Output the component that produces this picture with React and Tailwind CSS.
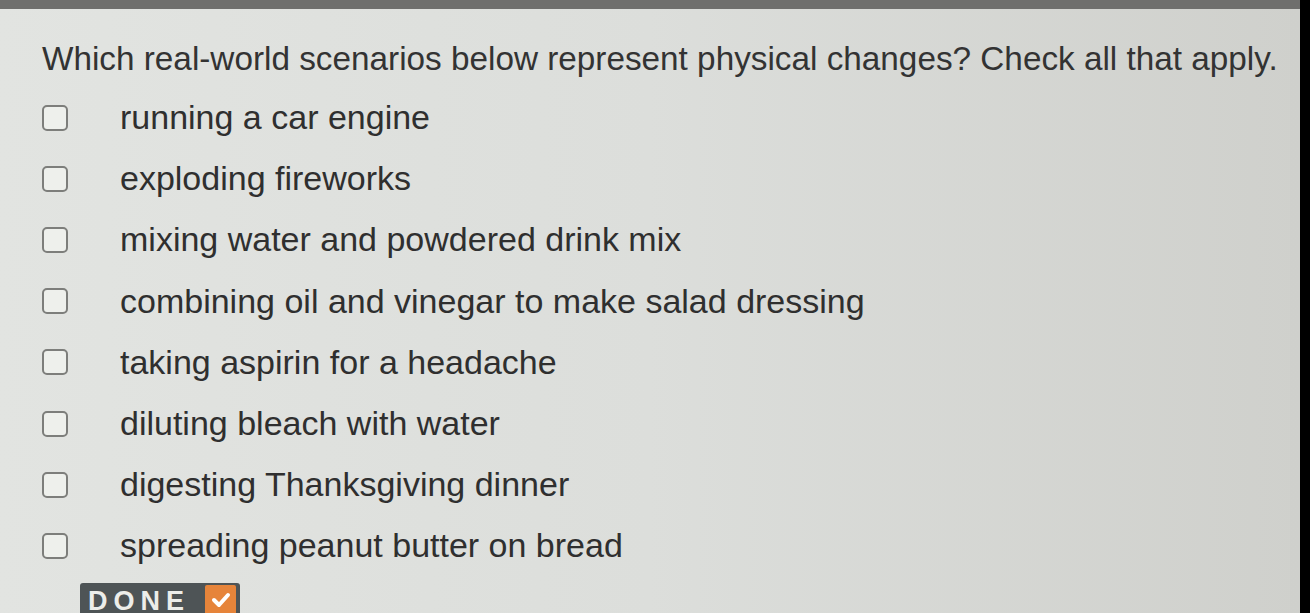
const options = [
  'running a car engine',
  'exploding fireworks',
  'mixing water and powdered drink mix',
  'combining oil and vinegar to make salad dressing',
  'taking aspirin for a headache',
  'diluting bleach with water',
  'digesting Thanksgiving dinner',
  'spreading peanut butter on bread',
]

function App() {
  return (
    <div className="flex h-[613px] w-[1310px] overflow-hidden bg-black">
      <div className="flex w-[1300px] flex-col bg-gradient-to-r from-[#e2e4e1] via-[#dcdedb] to-[#cfd0cc] font-['Liberation_Sans',Arial,sans-serif]">
        <div className="h-[9px] shrink-0 bg-[#6f6f6d]" />
        <h1 className="ml-[42px] mt-[30px] shrink-0 whitespace-nowrap text-[33.3px] leading-[40px] text-[#333333]">
          Which real-world scenarios below represent physical changes? Check all that apply.
        </h1>
        <ul className="mt-[8px] flex shrink-0 flex-col">
          {options.map((option) => (
            <li key={option} className="flex h-[61.2px] items-center">
              <span className="ml-[42px] h-[26px] w-[26px] rounded-[5px] border-2 border-[#7d7e7b] bg-[#eef0ec]" />
              <span className="ml-[52px] whitespace-nowrap text-[34px] text-[#2f2f2f]">{option}</span>
            </li>
          ))}
        </ul>
        <div className="ml-[80px] mt-[6px] flex h-[34px] w-[160px] shrink-0 items-start rounded-[3px] bg-[#4e5456] pl-[8px] pt-[2px]">
          <span className="text-[27px] font-bold leading-[32px] tracking-[6px] text-[#ecedea]">DONE</span>
          <span className="ml-auto mr-[4px] flex h-[30px] w-[31px] items-center justify-center rounded-[2px] bg-[#e6843a]">
            <svg width="20" height="16" viewBox="0 0 20 16">
              <path d="M3 8 L8 13 L17 3" fill="none" stroke="#fff" strokeWidth="4" strokeLinecap="round" strokeLinejoin="round" />
            </svg>
          </span>
        </div>
      </div>
    </div>
  )
}

export default App
